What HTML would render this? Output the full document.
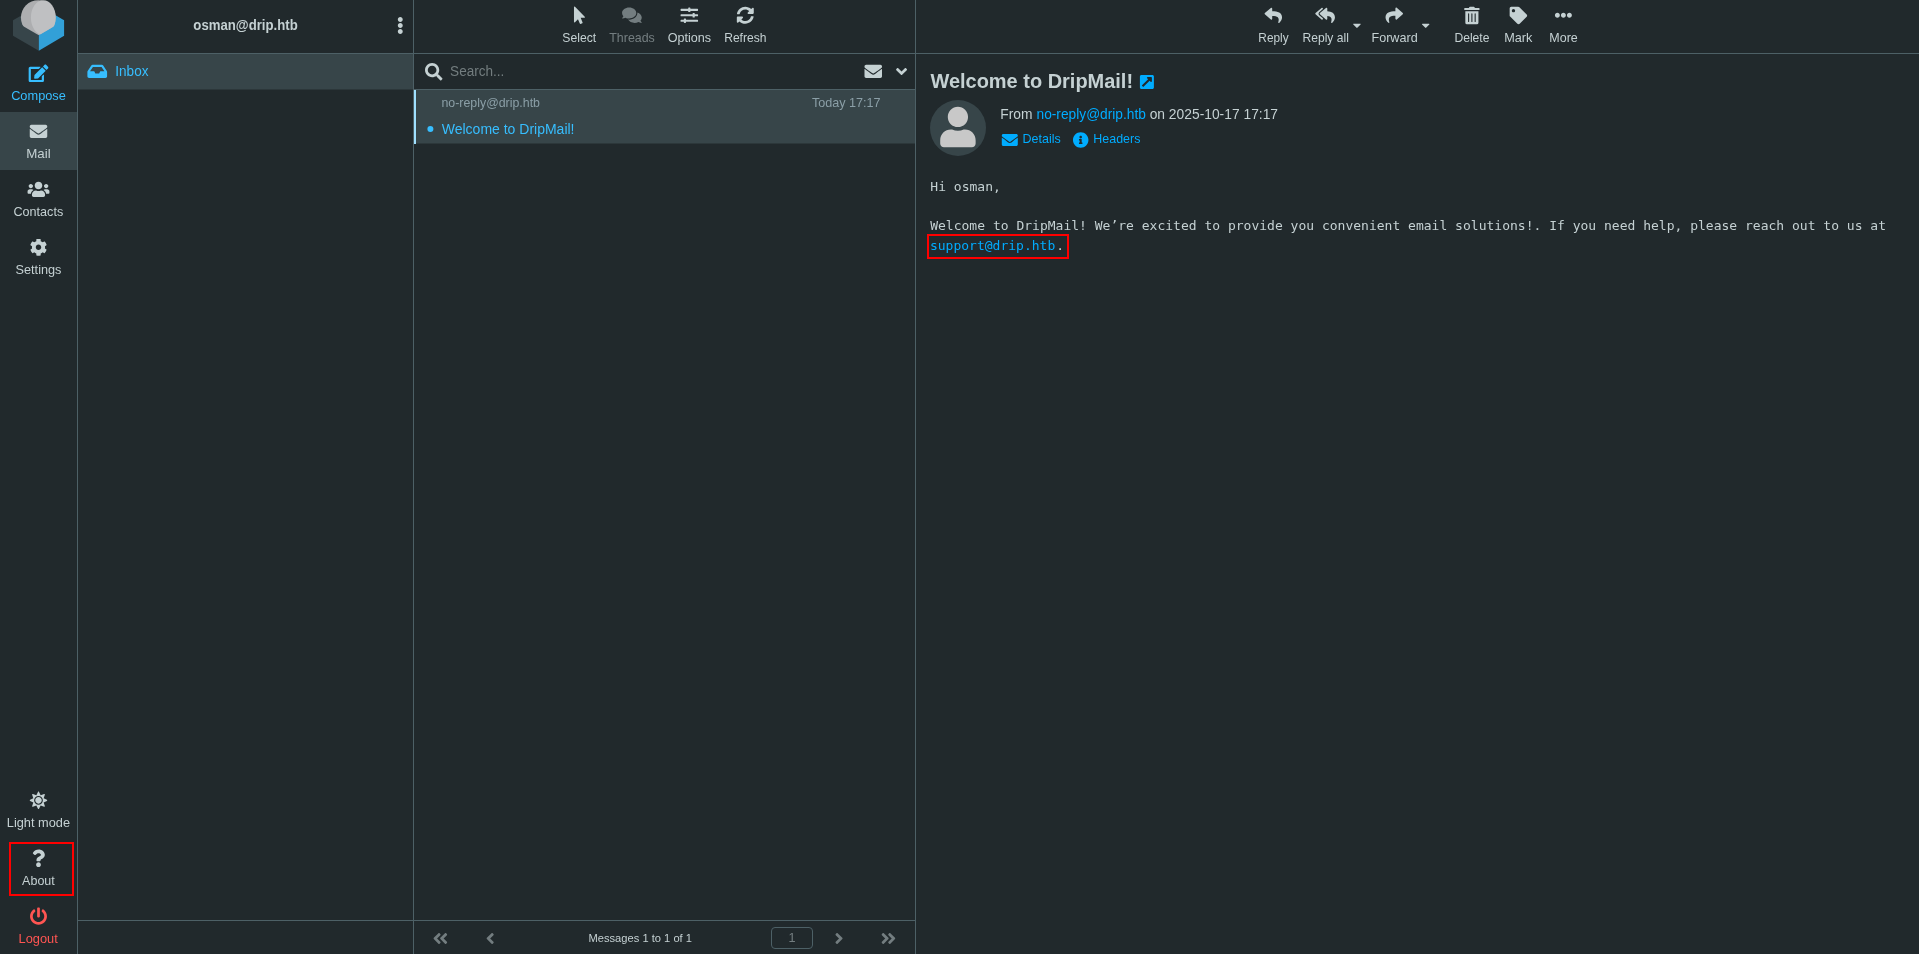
<!DOCTYPE html>
<html lang="en">
<head>
<meta charset="utf-8">
<title>DripMail :: Welcome to DripMail!</title>
<style>
*{box-sizing:border-box;margin:0;padding:0}
html,body{width:1919px;height:954px;overflow:hidden;background:#21292c;color:#c5d1d3;font-family:"Liberation Sans",Arial,sans-serif;font-size:14px}
a{color:#00acff;text-decoration:none}
h2{font-weight:700}
svg{display:block;fill:currentColor;overflow:visible}
.abs,.ic,.t,.redbox{position:absolute}
.ic{transform-origin:50% 50%}
.t{white-space:pre;line-height:1;transform-origin:0 0}
.mono{font-family:"DejaVu Sans Mono","Liberation Mono",monospace;letter-spacing:0.008px}
.redbox{border:2px solid #ff0000}
#menu,#sidebar,#list,#content{position:absolute;top:0;height:954px;will-change:transform}
#menu{left:0;width:78px;border-right:1px solid #4d6066}
#sidebar{left:78px;width:336px;border-right:1px solid #4d6066}
#list{left:414px;width:502px;border-right:1px solid #4d6066}
#content{left:916px;width:1003px}
.header{position:absolute;left:0;top:0;right:0;height:54px;border-bottom:1px solid #4d6066}
</style>
</head>
<body>
<nav id="menu">
<svg class="ic" id="logo" width="78" height="54" viewBox="0 0 78 54" style="left:0;top:0" aria-hidden="true">
<polygon points="13,20.3 38.8,5.4 38.8,50.8 13,35.8" fill="#37454a"/>
<polygon points="38.8,5.4 64.1,20.3 64.1,35.8 38.8,50.8" fill="#32a0d8"/>
<clipPath id="lc"><polygon points="0,-5 78,-5 78,12.2 38.8,35.2 0,12.8"/></clipPath>
<g clip-path="url(#lc)"><circle cx="38.3" cy="17.6" r="17.4" fill="#adaeb0"/><ellipse cx="43.3" cy="17.6" rx="12.4" ry="17.4" fill="#bfc0c2"/></g>
</svg>
<a class="mi" href="#compose"><svg class="ic" viewBox="0 0 576 512" width="19.69" height="17.50" style="left:28px;top:64px;transform:translate(0.66px,0.60px);color:#37beff" aria-hidden="true"><path d="M402.600 83.200l90.200 90.200c3.800 3.800 3.800 10 0 13.800L274.400 405.600l-92.800 10.300c-12.400 1.400-22.900-9.100-21.500-21.500l10.300-92.800L388.800 83.200c3.800-3.800 10-3.800 13.800 0zm162-22.900l-48.800-48.800c-15.200-15.200-39.900-15.200-55.200 0l-35.400 35.400c-3.800 3.800-3.800 10 0 13.800l90.200 90.200c3.800 3.800 10 3.800 13.800 0l35.400-35.400c15.200-15.300 15.200-40 0-55.200zM384 346.200V448H64V128h229.800c3.200 0 6.200-1.300 8.500-3.500l40-40c7.600-7.600 2.200-20.500-8.500-20.500H48C21.500 64 0 85.500 0 112v352c0 26.500 21.500 48 48 48h352c26.500 0 48-21.500 48-48V306.200c0-10.700-12.900-16-20.500-8.500l-40 40c-2.200 2.300-3.500 5.300-3.500 8.500z"/></svg><span id="m_compose" class="t" style="left:11px;top:90px;font-size:12.6px;color:#37beff;transform:matrix(1.0156,0,0,1,0.13,0)">Compose</span></a>
<div class="abs" style="left:0;top:112px;width:77px;height:58px;background:#374549"></div><a class="mi" href="#mail"><svg class="ic" viewBox="0 0 512 512" width="17.50" height="17.50" style="left:29px;top:122px;transform:translate(0.75px,0.60px);color:#c5d1d3" aria-hidden="true"><path d="M502.3 190.8c3.9-3.1 9.7-.2 9.7 4.7V400c0 26.5-21.5 48-48 48H48c-26.5 0-48-21.5-48-48V195.6c0-5 5.7-7.8 9.7-4.7 22.4 17.4 52.1 39.5 154.1 113.6 21.1 15.4 56.7 47.8 92.2 47.6 35.7.3 72-32.8 92.3-47.6 102-74.1 131.6-96.3 154-113.7zM256 320c23.2.4 56.6-29.2 73.4-41.4 132.7-96.3 142.8-104.7 173.4-128.7 5.8-4.5 9.2-11.5 9.2-18.9v-19c0-26.5-21.5-48-48-48H48C21.5 64 0 85.5 0 112v19c0 7.4 3.4 14.3 9.2 18.9 30.6 23.9 40.7 32.4 173.4 128.7 16.8 12.2 50.2 41.8 73.4 41.4z"/></svg><span id="m_mail" class="t" style="left:26px;top:148px;font-size:12.6px;color:#c5d1d3;transform:matrix(1.0596,0,0,1,0.17,0)">Mail</span></a>
<a class="mi" href="#contacts"><svg class="ic" viewBox="0 0 640 512" width="21.88" height="17.50" style="left:27px;top:180px;transform:translate(0.56px,0.60px);color:#c5d1d3" aria-hidden="true"><path d="M96 224c35.300 0 64-28.700 64-64s-28.700-64-64-64-64 28.700-64 64 28.700 64 64 64zm448 0c35.300 0 64-28.700 64-64s-28.700-64-64-64-64 28.700-64 64 28.700 64 64 64zm32 32h-64c-17.600 0-33.500 7.100-45.100 18.600 40.300 22.100 68.900 62 75.100 109.400h66c17.700 0 32-14.300 32-32v-32c0-35.300-28.700-64-64-64zm-256 0c61.900 0 112-50.100 112-112S381.900 32 320 32 208 82.100 208 144s50.100 112 112 112zm76.800 32h-8.300c-20.800 10-43.900 16-68.500 16s-47.600-6-68.500-16h-8.300C179.600 288 128 339.600 128 403.200V432c0 26.500 21.500 48 48 48h288c26.500 0 48-21.500 48-48v-28.800c0-63.600-51.600-115.200-115.200-115.200zm-223.700-13.400C161.500 263.100 145.600 256 128 256H64c-35.300 0-64 28.700-64 64v32c0 17.700 14.300 32 32 32h65.900c6.300-47.400 34.900-87.300 75.200-109.400z"/></svg><span id="m_contacts" class="t" style="left:13px;top:206px;font-size:12.6px;color:#c5d1d3;transform:matrix(1.0007,0,0,1,0.49,0)">Contacts</span></a>
<a class="mi" href="#settings"><svg class="ic" viewBox="0 0 512 512" width="17.50" height="17.50" style="left:29px;top:238px;transform:translate(0.75px,0.60px);color:#c5d1d3" aria-hidden="true"><path d="M487.4 315.7l-42.6-24.6c4.3-23.2 4.3-47 0-70.2l42.6-24.6c4.9-2.8 7.1-8.6 5.5-14-11.1-35.6-30-67.8-54.7-94.6-3.8-4.1-10-5.1-14.8-2.3L380.8 110c-17.9-15.4-38.5-27.3-60.8-35.1V25.8c0-5.6-3.9-10.5-9.4-11.7-36.7-8.2-74.3-7.8-109.2 0-5.5 1.2-9.4 6.1-9.4 11.7V75c-22.2 7.9-42.8 19.8-60.8 35.1L88.7 85.5c-4.9-2.8-11-1.9-14.8 2.3-24.7 26.7-43.6 58.9-54.7 94.6-1.7 5.4.6 11.2 5.5 14L67.3 221c-4.3 23.2-4.3 47 0 70.2l-42.6 24.6c-4.9 2.8-7.1 8.6-5.5 14 11.1 35.6 30 67.8 54.7 94.6 3.8 4.1 10 5.1 14.8 2.3l42.6-24.6c17.9 15.4 38.5 27.3 60.8 35.1v49.2c0 5.6 3.9 10.5 9.4 11.7 36.7 8.2 74.3 7.8 109.2 0 5.5-1.2 9.4-6.1 9.4-11.7v-49.2c22.2-7.9 42.8-19.8 60.8-35.1l42.6 24.6c4.9 2.8 11 1.9 14.8-2.3 24.7-26.7 43.6-58.9 54.7-94.6 1.5-5.5-.7-11.3-5.6-14.1zM256 336c-44.1 0-80-35.9-80-80s35.9-80 80-80 80 35.9 80 80-35.9 80-80 80z"/></svg><span id="m_settings" class="t" style="left:15px;top:264px;font-size:12.6px;color:#c5d1d3;transform:matrix(1.0097,0,0,1,0.52,0)">Settings</span></a>
<a class="mi" href="#light"><svg class="ic" viewBox="0 0 512 512" width="17.50" height="17.50" style="left:29px;top:791px;transform:translate(0.75px,0.60px);color:#c5d1d3" aria-hidden="true"><path d="M256 160c-52.900 0-96 43.100-96 96s43.100 96 96 96 96-43.100 96-96-43.100-96-96-96zm246.400 80.500l-94.700-47.300 33.500-100.400c4.500-13.600-8.400-26.500-21.900-21.900l-100.400 33.500-47.400-94.800c-6.400-12.800-24.600-12.800-31 0l-47.300 94.700L92.700 70.800c-13.600-4.500-26.500 8.400-21.900 21.900l33.500 100.400-94.700 47.400c-12.800 6.400-12.800 24.600 0 31l94.700 47.300-33.500 100.500c-4.500 13.600 8.400 26.500 21.900 21.900l100.400-33.500 47.300 94.700c6.400 12.800 24.600 12.800 31 0l47.300-94.700 100.400 33.500c13.600 4.500 26.500-8.400 21.900-21.900l-33.500-100.400 94.700-47.300c13-6.500 13-24.700.2-31.100zm-155.900 106c-49.900 49.900-131.100 49.900-181 0-49.900-49.900-49.900-131.100 0-181 49.900-49.900 131.100-49.900 181 0 49.900 49.900 49.900 131.100 0 181z"/></svg><span id="m_light" class="t" style="left:6px;top:817px;font-size:12.6px;color:#c5d1d3;transform:matrix(1.0143,0,0,1,0.81,0)">Light mode</span></a>
<a class="mi" href="#about"><svg class="ic" viewBox="0 0 384 512" width="13.12" height="17.50" style="left:31px;top:849px;transform:translate(0.94px,0.60px);color:#c5d1d3" aria-hidden="true"><path d="M202.021 0C122.202 0 70.503 32.703 29.914 91.026c-7.363 10.580-5.093 25.086 5.178 32.874l43.138 32.709c10.373 7.865 25.132 6.026 33.253-4.148 25.049-31.381 43.630-49.449 82.757-49.449 30.764 0 68.816 19.799 68.816 49.631 0 22.552-18.617 34.134-48.993 51.164-35.423 19.860-82.299 44.576-82.299 106.405V320c0 13.255 10.745 24 24 24h72.471c13.255 0 24-10.745 24-24v-5.773c0-42.860 125.268-44.645 125.268-160.627C377.504 66.256 286.902 0 202.021 0zM192 373.459c-38.196 0-69.271 31.075-69.271 69.271 0 38.195 31.075 69.270 69.271 69.270s69.271-31.075 69.271-69.271-31.075-69.270-69.271-69.270z"/></svg><span id="m_about" class="t" style="left:22px;top:875px;font-size:12.6px;color:#c5d1d3;transform:matrix(0.9921,0,0,1,0.11,0)">About</span></a>
<a class="mi" href="#logout"><svg class="ic" viewBox="0 0 512 512" width="17.50" height="17.50" style="left:29px;top:907px;transform:translate(0.75px,0.60px);color:#ff5552" aria-hidden="true"><path d="M400 54.100c63 45 104 118.600 104 201.900 0 136.800-110.800 247.700-247.500 248C120 504.300 8.200 393 8 256.400 7.900 173.100 48.900 99.300 111.800 54.200c11.700-8.300 28-4.800 35 7.700L162.600 90c5.900 10.500 3.100 23.800-6.600 31-41.500 30.800-68 79.600-68 134.900-.1 92.300 74.500 168.100 168 168.100 91.600 0 168.600-74.200 168-169.100-.3-51.800-24.700-101.800-68.100-134-9.700-7.200-12.400-20.500-6.500-30.900l15.800-28.100c7-12.400 23.200-16.100 34.800-7.800zM296 264V24c0-13.300-10.700-24-24-24h-32c-13.300 0-24 10.700-24 24v240c0 13.300 10.700 24 24 24h32c13.300 0 24-10.700 24-24z"/></svg><span id="m_logout" class="t" style="left:18px;top:933px;font-size:12.6px;color:#ff5552;transform:matrix(1.0186,0,0,1,0.56,0)">Logout</span></a>
<div class="redbox" style="left:9px;top:842px;width:65px;height:54px"></div>
</nav>
<aside id="sidebar"><header class="header">
<span id="acct" class="t" style="left:115px;top:18px;font-size:14.4px;color:#c5d1d3;transform:matrix(0.9155,0,0,1,0.36,0);font-weight:700">osman@drip.htb</span>
<svg class="ic" viewBox="0 0 192 512" width="6.56" height="17.50" style="left:319px;top:16px;transform:translate(0.00px,0.70px);color:#c5d1d3" aria-hidden="true"><path d="M96 184c39.800 0 72 32.200 72 72s-32.200 72-72 72-72-32.200-72-72 32.200-72 72-72zM24 80c0 39.800 32.200 72 72 72s72-32.200 72-72S135.800 8 96 8 24 40.200 24 80zm0 352c0 39.800 32.200 72 72 72s72-32.200 72-72-32.200-72-72-72-72 32.200-72 72z"/></svg>
</header>
<div class="abs" style="left:0;top:54px;width:335px;height:36px;background:#374549;border-bottom:1px solid #2c373a"></div>
<div class="abs" style="left:0;top:920px;width:335px;height:34px;border-top:1px solid #4d6066"></div>
<svg class="ic" viewBox="0 0 576 512" width="19.69" height="17.50" style="left:9px;top:62px;transform:translate(0.40px,0.60px);color:#37beff" aria-hidden="true"><path d="M567.938 243.908L462.250 85.374A48.003 48.003 0 0 0 422.311 64H153.689a48 48 0 0 0-39.938 21.374L8.062 243.908A47.994 47.994 0 0 0 0 270.533V400c0 26.510 21.490 48 48 48h480c26.510 0 48-21.490 48-48V270.533a47.994 47.994 0 0 0-8.062-26.625zM162.252 128h251.497l85.333 128H376l-32 64H232l-32-64H76.918l85.334-128z"/></svg>
<a id="inbox" class="t" href="#inbox" style="left:37px;top:64px;font-size:14px;color:#37beff;transform:matrix(0.9688,0,0,1,0.28,0)">Inbox</a>
</aside>
<section id="list"><header class="header">
<svg class="ic" viewBox="0 0 320 512" width="10.94" height="17.50" style="left:159px;top:6px;transform:translate(0.98px,0.50px);color:#c5d1d3" aria-hidden="true"><path d="M302.189 329.126H196.105l55.831 135.993c3.889 9.428-.555 19.999-9.444 23.999l-49.165 21.427c-9.165 4-19.443-.571-23.332-9.714l-53.053-129.136-86.664 89.138C18.729 472.710 0 463.554 0 447.977V18.299C0 1.899 19.921-6.096 30.277 5.443l284.412 292.542c11.472 11.179 3.007 31.141-12.500 31.141z"/></svg><span id="tb_select" class="t" style="left:148px;top:32px;font-size:12.6px;color:#c5d1d3;transform:matrix(0.9673,0,0,1,0.28,0)">Select</span>
<svg class="ic" viewBox="0 0 576 512" width="19.69" height="17.50" style="left:208px;top:6px;transform:translate(0.06px,0.50px);color:#c5d1d3;opacity:0.5" aria-hidden="true"><path d="M416 192c0-88.400-93.100-160-208-160S0 103.600 0 192c0 34.300 14.100 65.900 38 92-13.400 30.200-35.500 54.200-35.800 54.500-2.200 2.300-2.800 5.700-1.500 8.700S4.800 352 8 352c36.600 0 66.900-12.300 88.700-25 32.200 15.700 70.300 25 111.300 25 114.900 0 208-71.600 208-160zm122 220c23.900-26 38-57.700 38-92 0-66.900-53.500-124.200-129.300-148.100.9 6.600 1.300 13.300 1.300 20.100 0 105.900-107.700 192-240 192-10.800 0-21.300-.8-31.700-1.900C207.800 439.600 281.800 480 368 480c41 0 79.100-9.200 111.300-25 21.800 12.700 52.100 25 88.700 25 3.200 0 6.100-1.900 7.300-4.800 1.300-2.900.7-6.300-1.500-8.700-.3-.3-22.400-24.200-35.800-54.500z"/></svg><span id="tb_threads" class="t" style="left:195px;top:32px;font-size:12.6px;color:#c5d1d3;transform:matrix(0.9858,0,0,1,0.27,0);opacity:0.5">Threads</span>
<svg class="ic" viewBox="0 0 512 512" width="17.50" height="17.50" style="left:266px;top:6px;transform:translate(0.55px,0.50px);color:#c5d1d3" aria-hidden="true"><path d="M496 384H160v-16c0-8.800-7.200-16-16-16h-32c-8.800 0-16 7.200-16 16v16H16c-8.800 0-16 7.200-16 16v32c0 8.800 7.200 16 16 16h80v16c0 8.800 7.200 16 16 16h32c8.800 0 16-7.200 16-16v-16h336c8.800 0 16-7.200 16-16v-32c0-8.800-7.200-16-16-16zm0-160h-80v-16c0-8.800-7.200-16-16-16h-32c-8.800 0-16 7.200-16 16v16H16c-8.800 0-16 7.200-16 16v32c0 8.800 7.200 16 16 16h336v16c0 8.800 7.200 16 16 16h32c8.800 0 16-7.200 16-16v-16h80c8.800 0 16-7.200 16-16v-32c0-8.800-7.200-16-16-16zm0-160H288V48c0-8.800-7.200-16-16-16h-32c-8.800 0-16 7.200-16 16v16H16C7.200 64 0 71.200 0 80v32c0 8.800 7.200 16 16 16h208v16c0 8.800 7.200 16 16 16h32c8.800 0 16-7.200 16-16v-16h208c8.800 0 16-7.200 16-16V80c0-8.800-7.200-16-16-16z"/></svg><span id="tb_options" class="t" style="left:253px;top:32px;font-size:12.6px;color:#c5d1d3;transform:matrix(1.0004,0,0,1,0.65,0)">Options</span>
<svg class="ic" viewBox="0 0 512 512" width="17.50" height="17.50" style="left:322px;top:6px;transform:translate(0.55px,0.50px);color:#c5d1d3" aria-hidden="true"><path d="M370.720 133.280C339.458 104.008 298.888 87.962 255.848 88c-77.458.068-144.328 53.178-162.791 126.850-1.344 5.363-6.122 9.150-11.651 9.150H24.103c-7.498 0-13.194-6.807-11.807-14.176C33.933 94.924 134.813 8 256 8c66.448 0 126.791 26.136 171.315 68.685L463.030 40.970C478.149 25.851 504 36.559 504 57.941V192c0 13.255-10.745 24-24 24H345.941c-21.382 0-32.090-25.851-16.971-40.971l41.750-41.749zM32 296h134.059c21.382 0 32.090 25.851 16.971 40.971l-41.750 41.750c31.262 29.273 71.835 45.319 114.876 45.280 77.418-.070 144.315-53.144 162.787-126.849 1.344-5.363 6.122-9.150 11.651-9.150h57.304c7.498 0 13.194 6.807 11.807 14.176C478.067 417.076 377.187 504 256 504c-66.448 0-126.791-26.136-171.315-68.685L48.970 471.030C33.851 486.149 8 475.441 8 454.059V320c0-13.255 10.745-24 24-24z"/></svg><span id="tb_refresh" class="t" style="left:310px;top:32px;font-size:12.6px;color:#c5d1d3;transform:matrix(0.9579,0,0,1,0.17,0)">Refresh</span>
</header>
<div class="abs" style="left:0;top:54px;width:501px;height:36px;border-bottom:1px solid #4d6066"></div>
<svg class="ic" viewBox="0 0 512 512" width="17.50" height="17.50" style="left:11px;top:63px;color:#c5d1d3" aria-hidden="true"><path d="M505 442.7L405.3 343c-4.5-4.5-10.6-7-17-7H372c27.6-35.3 44-79.7 44-128C416 93.1 322.9 0 208 0S0 93.1 0 208s93.1 208 208 208c48.3 0 92.7-16.4 128-44v16.3c0 6.4 2.5 12.5 7 17l99.7 99.7c9.4 9.4 24.6 9.4 33.9 0l28.3-28.3c9.4-9.4 9.4-24.6.1-34zM208 336c-70.7 0-128-57.2-128-128 0-70.7 57.2-128 128-128 70.7 0 128 57.2 128 128 0 70.7-57.2 128-128 128z"/></svg>
<span id="search" class="t" style="left:36px;top:64px;font-size:14px;color:#737d7f;transform:matrix(0.9691,0,0,1,0.09,0)">Search...</span>
<svg class="ic" viewBox="0 0 512 512" width="17.50" height="17.50" style="left:450px;top:62px;transform:translate(0.50px,0.60px);color:#c5d1d3" aria-hidden="true"><path d="M502.3 190.8c3.9-3.1 9.7-.2 9.7 4.7V400c0 26.5-21.5 48-48 48H48c-26.5 0-48-21.5-48-48V195.6c0-5 5.7-7.8 9.7-4.7 22.4 17.4 52.1 39.5 154.1 113.6 21.1 15.4 56.7 47.8 92.2 47.6 35.7.3 72-32.8 92.3-47.6 102-74.1 131.6-96.3 154-113.7zM256 320c23.2.4 56.6-29.2 73.4-41.4 132.7-96.3 142.8-104.7 173.4-128.7 5.8-4.5 9.2-11.5 9.2-18.9v-19c0-26.5-21.5-48-48-48H48C21.5 64 0 85.5 0 112v19c0 7.4 3.4 14.3 9.2 18.9 30.6 23.9 40.7 32.4 173.4 128.7 16.8 12.2 50.2 41.8 73.4 41.4z"/></svg>
<svg class="ic" viewBox="0 0 256 512" width="8.75" height="17.50" style="left:483px;top:62px;transform:translate(0.17px,0.75px) rotate(-90deg);color:#c5d1d3" aria-hidden="true"><path d="M31.700 239l136-136c9.400-9.400 24.600-9.400 33.900 0l22.600 22.600c9.400 9.400 9.400 24.600 0 33.900L127.900 256l96.400 96.400c9.400 9.400 9.400 24.600 0 33.900L201.700 409c-9.400 9.400-24.600 9.400-33.900 0l-136-136c-9.500-9.400-9.500-24.600-.1-34z"/></svg>
<div class="abs" style="left:0;top:90px;width:501px;height:53px;background:#374549"></div>
<div class="abs" style="left:0;top:143px;width:501px;height:1px;background:#2c373a"></div>
<div class="abs" style="left:0;top:90px;width:2px;height:54px;background:#a0e0ff"></div>
<span id="l_from" class="t" style="left:27px;top:97px;font-size:12.6px;color:#8b9fa7;transform:matrix(0.9825,0,0,1,0.46,0)">no-reply@drip.htb</span>
<span id="l_date" class="t" style="left:397px;top:97px;font-size:12.6px;color:#8b9fa7;transform:matrix(1.0015,0,0,1,0.88,0)">Today 17:17</span>
<div class="abs" style="left:13px;top:126px;transform:translate(0.40px,0.00px);width:6px;height:6px;border-radius:50%;background:#37beff"></div>
<span id="l_subj" class="t" style="left:27px;top:122px;font-size:14px;color:#37beff;transform:matrix(0.9996,0,0,1,0.77,0)">Welcome to DripMail!</span>
<div class="abs" style="left:0;top:920px;width:501px;height:34px;border-top:1px solid #4d6066"></div>
<svg class="ic" viewBox="0 0 448 512" width="15.31" height="17.50" style="left:18px;top:929px;transform:translate(0.70px,0.70px);color:#c5d1d3;opacity:0.5" aria-hidden="true"><path d="M223.700 239l136-136c9.400-9.400 24.600-9.400 33.900 0l22.600 22.600c9.400 9.400 9.400 24.600 0 33.900L319.900 256l96.400 96.400c9.400 9.400 9.400 24.600 0 33.900L393.700 409c-9.400 9.400-24.600 9.400-33.900 0l-136-136c-9.500-9.400-9.500-24.600-.1-34zm-192 34l136 136c9.400 9.400 24.600 9.400 33.900 0l22.600-22.600c9.400-9.400 9.400-24.600 0-33.900L127.900 256l96.400-96.400c9.400-9.400 9.400-24.600 0-33.900L201.700 103c-9.400-9.400-24.600-9.400-33.900 0l-136 136c-9.500 9.400-9.500 24.600-.1 34z"/></svg>
<svg class="ic" viewBox="0 0 256 512" width="8.75" height="17.50" style="left:71px;top:929px;transform:translate(0.80px,0.70px);color:#c5d1d3;opacity:0.5" aria-hidden="true"><path d="M31.700 239l136-136c9.400-9.400 24.600-9.400 33.900 0l22.600 22.600c9.400 9.400 9.400 24.600 0 33.900L127.900 256l96.400 96.400c9.400 9.400 9.400 24.600 0 33.900L201.700 409c-9.400 9.400-24.600 9.400-33.900 0l-136-136c-9.500-9.400-9.500-24.600-.1-34z"/></svg>
<span id="pager" class="t" style="left:174px;top:933px;font-size:11.2px;color:#c5d1d3;transform:matrix(0.9972,0,0,1,0.43,0)">Messages 1 to 1 of 1</span>
<div class="abs" style="left:357px;top:927px;width:42px;height:22px;border:1px solid #4d6066;border-radius:4px"></div>
<span id="pagenum" class="t" style="left:374px;top:932px;font-size:12.6px;color:#c5d1d3;transform:matrix(1.0000,0,0,1,0.41,0);opacity:0.5">1</span>
<svg class="ic" viewBox="0 0 256 512" width="8.75" height="17.50" style="left:420px;top:929px;transform:translate(0.64px,0.70px) scaleX(-1);color:#c5d1d3;opacity:0.5" aria-hidden="true"><path d="M31.700 239l136-136c9.400-9.400 24.600-9.400 33.900 0l22.600 22.600c9.400 9.400 9.400 24.600 0 33.900L127.900 256l96.400 96.400c9.400 9.400 9.400 24.600 0 33.900L201.700 409c-9.400 9.400-24.600 9.400-33.900 0l-136-136c-9.500-9.400-9.500-24.600-.1-34z"/></svg>
<svg class="ic" viewBox="0 0 448 512" width="15.31" height="17.50" style="left:466px;top:929px;transform:translate(0.80px,0.70px) scaleX(-1);color:#c5d1d3;opacity:0.5" aria-hidden="true"><path d="M223.700 239l136-136c9.400-9.400 24.600-9.400 33.900 0l22.600 22.600c9.400 9.400 9.400 24.600 0 33.900L319.900 256l96.400 96.400c9.400 9.400 9.400 24.600 0 33.900L393.700 409c-9.400 9.400-24.600 9.400-33.900 0l-136-136c-9.500-9.400-9.500-24.600-.1-34zm-192 34l136 136c9.400 9.400 24.600 9.400 33.900 0l22.600-22.600c9.400-9.400 9.400-24.600 0-33.900L127.900 256l96.400-96.400c9.400-9.400 9.400-24.600 0-33.900L201.700 103c-9.400-9.400-24.600-9.400-33.900 0l-136 136c-9.500 9.400-9.500 24.600-.1 34z"/></svg>
</section>
<main id="content"><header class="header">
<svg class="ic" viewBox="0 0 512 512" width="17.50" height="17.50" style="left:348px;top:6px;transform:translate(0.55px,0.60px);color:#c5d1d3" aria-hidden="true"><path d="M8.309 189.836L184.313 37.851C199.719 24.546 224 35.347 224 56.015v80.053c160.629 1.839 288 34.032 288 186.258 0 61.441-39.581 122.309-83.333 154.132-13.653 9.931-33.111-2.533-28.077-18.631 45.344-145.012-21.507-183.51-176.59-185.742V360c0 20.7-24.3 31.453-39.687 18.164l-176.004-152c-11.071-9.562-11.086-26.753 0-36.328z"/></svg><span id="tb_reply" class="t" style="left:342px;top:32px;font-size:12.6px;color:#c5d1d3;transform:matrix(0.9388,0,0,1,0.35,0)">Reply</span>
<svg class="ic" viewBox="0 0 576 512" width="19.69" height="17.50" style="left:399px;top:6px;transform:translate(0.26px,0.60px);color:#c5d1d3" aria-hidden="true"><path d="M136.309 189.836L312.313 37.851C327.72 24.546 352 35.348 352 56.015v82.763c129.182 10.231 224 52.212 224 183.548 0 61.441-39.582 122.309-83.333 154.132-13.653 9.931-33.111-2.533-28.077-18.631 38.512-123.162-3.922-169.482-112.59-182.015v84.175c0 20.701-24.3 31.453-39.687 18.164L136.309 226.164c-11.071-9.561-11.086-26.753 0-36.328zm-128 36.328L184.313 378.15C199.7 391.439 224 380.687 224 359.986v-15.818l-108.606-93.785A55.96 55.96 0 0 1 96 207.998a55.953 55.953 0 0 1 19.393-42.38L224 71.832V56.015c0-20.667-24.28-31.469-39.687-18.164L8.309 189.836c-11.086 9.575-11.071 26.767 0 36.328z"/></svg><span id="tb_replyall" class="t" style="left:386px;top:32px;font-size:12.6px;color:#c5d1d3;transform:matrix(0.9604,0,0,1,0.47,0)">Reply all</span>
<svg class="ic" viewBox="0 0 320 512" width="8.12" height="13.00" style="left:436px;top:18px;transform:translate(0.89px,0.80px);color:#c5d1d3" aria-hidden="true"><path d="M31.300 192h257.300c17.800 0 26.700 21.500 14.100 34.100L174.100 354.800c-7.800 7.800-20.500 7.800-28.300 0L17.200 226.100C4.600 213.500 13.500 192 31.300 192z"/></svg>
<svg class="ic" viewBox="0 0 512 512" width="17.50" height="17.50" style="left:469px;top:6px;transform:translate(0.55px,0.50px);color:#c5d1d3" aria-hidden="true"><path d="M503.691 189.836L327.687 37.851C312.281 24.546 288 35.347 288 56.015v80.053C127.371 137.907 0 170.1 0 322.326c0 61.441 39.581 122.309 83.333 154.132 13.653 9.931 33.111-2.533 28.077-18.631C66.066 312.814 132.917 274.316 288 272.085V360c0 20.7 24.3 31.453 39.687 18.164l176.004-152c11.071-9.562 11.086-26.753 0-36.328z"/></svg><span id="tb_forward" class="t" style="left:455px;top:32px;font-size:12.6px;color:#c5d1d3;transform:matrix(1.0004,0,0,1,0.45,0)">Forward</span>
<svg class="ic" viewBox="0 0 320 512" width="8.12" height="13.00" style="left:505px;top:18px;transform:translate(0.64px,0.80px);color:#c5d1d3" aria-hidden="true"><path d="M31.300 192h257.300c17.800 0 26.700 21.500 14.100 34.100L174.100 354.800c-7.800 7.800-20.500 7.800-28.300 0L17.200 226.100C4.600 213.500 13.500 192 31.300 192z"/></svg>
<svg class="ic" viewBox="0 0 448 512" width="15.31" height="17.50" style="left:548px;top:6px;transform:translate(0.24px,0.80px);color:#c5d1d3" aria-hidden="true"><path d="M32 464a48 48 0 0 0 48 48h288a48 48 0 0 0 48-48V128H32zm272-256a16 16 0 0 1 32 0v224a16 16 0 0 1-32 0zm-96 0a16 16 0 0 1 32 0v224a16 16 0 0 1-32 0zm-96 0a16 16 0 0 1 32 0v224a16 16 0 0 1-32 0zM432 32H312l-9.400-18.700A24 24 0 0 0 281.100 0H166.800a23.720 23.720 0 0 0-21.400 13.300L136 32H16A16 16 0 0 0 0 48v32a16 16 0 0 0 16 16h416a16 16 0 0 0 16-16V48a16 16 0 0 0-16-16z"/></svg><span id="tb_delete" class="t" style="left:538px;top:32px;font-size:12.6px;color:#c5d1d3;transform:matrix(0.9633,0,0,1,0.39,0)">Delete</span>
<svg class="ic" viewBox="0 0 512 512" width="17.50" height="17.50" style="left:593px;top:6px;transform:translate(0.65px,0.80px);color:#c5d1d3" aria-hidden="true"><path d="M0 252.118V48C0 21.490 21.490 0 48 0h204.118a48 48 0 0 1 33.941 14.059l211.882 211.882c18.745 18.745 18.745 49.137 0 67.882L293.823 497.941c-18.745 18.745-49.137 18.745-67.882 0L14.059 286.059A48 48 0 0 1 0 252.118zM112 64c-26.510 0-48 21.490-48 48s21.490 48 48 48 48-21.490 48-48-21.490-48-48-48z"/></svg><span id="tb_mark" class="t" style="left:588px;top:32px;font-size:12.6px;color:#c5d1d3;transform:matrix(1.0082,0,0,1,0.20,0)">Mark</span>
<svg class="ic" viewBox="0 0 512 512" width="17.50" height="17.50" style="left:638px;top:6px;transform:translate(0.65px,0.50px);color:#c5d1d3" aria-hidden="true"><path d="M328 256c0 39.800-32.200 72-72 72s-72-32.200-72-72 32.200-72 72-72 72 32.200 72 72zm104-72c-39.800 0-72 32.200-72 72s32.200 72 72 72 72-32.200 72-72-32.200-72-72-72zm-352 0c-39.800 0-72 32.200-72 72s32.200 72 72 72 72-32.200 72-72-32.200-72-72-72z"/></svg><span id="tb_more" class="t" style="left:633px;top:32px;font-size:12.6px;color:#c5d1d3;transform:matrix(0.9923,0,0,1,0.30,0)">More</span>
</header>
<h2 id="subject" class="t" style="left:14px;top:72px;font-size:19.6px;color:#c5d1d3;transform:matrix(1.0191,0,0,1,0.40,0);font-weight:700">Welcome to DripMail!</h2>
<svg class="ic" viewBox="0 0 448 512" width="14.00" height="16.00" style="left:223px;top:73px;transform:translate(0.90px,0.90px);color:#00acff" aria-hidden="true"><path d="M448 80v352c0 26.510-21.490 48-48 48H48c-26.510 0-48-21.490-48-48V80c0-26.510 21.490-48 48-48h352c26.510 0 48 21.490 48 48zm-88 16H248.029c-21.313 0-32.080 25.861-16.971 40.971l31.984 31.987L67.515 364.485c-4.686 4.686-4.686 12.284 0 16.971l31.029 31.029c4.687 4.686 12.285 4.686 16.971 0l195.526-195.526 31.988 31.991C358.058 263.977 384 253.425 384 231.979V120c0-13.255-10.745-24-24-24z"/></svg>
<div class="abs" style="left:14px;top:100px;width:56px;height:56px;border-radius:50%;background:#374549"></div>
<svg class="ic" viewBox="0 0 448 512" width="35.44" height="40.50" style="left:24px;top:106px;transform:translate(0.20px,0.80px);color:#c8c8c8" aria-hidden="true"><path d="M224 256c70.7 0 128-57.3 128-128S294.7 0 224 0 96 57.3 96 128s57.3 128 128 128zm89.6 32h-16.7c-22.2 10.2-46.9 16-72.9 16s-50.6-5.8-72.9-16h-16.7C60.2 288 0 348.2 0 422.4V464c0 26.5 21.5 48 48 48h352c26.5 0 48-21.5 48-48v-41.6c0-74.2-60.2-134.4-134.4-134.4z"/></svg>
<span id="from1" class="t" style="left:84px;top:107px;font-size:14px;color:#c5d1d3;transform:matrix(0.9861,0,0,1,0.34,0)">From</span>
<a id="from2" class="t" href="#from" style="left:120px;top:107px;font-size:14px;color:#00acff;transform:matrix(0.9815,0,0,1,0.50,0)">no-reply@drip.htb</a>
<span id="from3" class="t" style="left:233px;top:107px;font-size:14px;color:#c5d1d3;transform:matrix(0.9876,0,0,1,0.65,0)">on 2025-10-17 17:17</span>
<svg class="ic" viewBox="0 0 512 512" width="16.00" height="16.00" style="left:85px;top:131px;transform:translate(0.80px,0.90px);color:#00acff" aria-hidden="true"><path d="M502.3 190.8c3.9-3.1 9.7-.2 9.7 4.7V400c0 26.5-21.5 48-48 48H48c-26.5 0-48-21.5-48-48V195.6c0-5 5.7-7.8 9.7-4.7 22.4 17.4 52.1 39.5 154.1 113.6 21.1 15.4 56.7 47.8 92.2 47.6 35.7.3 72-32.8 92.3-47.6 102-74.1 131.6-96.3 154-113.7zM256 320c23.2.4 56.6-29.2 73.4-41.4 132.7-96.3 142.8-104.7 173.4-128.7 5.8-4.5 9.2-11.5 9.2-18.9v-19c0-26.5-21.5-48-48-48H48C21.5 64 0 85.5 0 112v19c0 7.4 3.4 14.3 9.2 18.9 30.6 23.9 40.7 32.4 173.4 128.7 16.8 12.2 50.2 41.8 73.4 41.4z"/></svg>
<a id="details" class="t" href="#details" style="left:106px;top:133px;font-size:12.6px;color:#00acff;transform:matrix(0.9935,0,0,1,0.46,0)">Details</a>
<svg class="ic" viewBox="0 0 512 512" width="16.00" height="16.00" style="left:156px;top:132px;transform:translate(0.70px,0.10px);color:#00acff" aria-hidden="true"><path d="M256 8C119.043 8 8 119.083 8 256c0 136.997 111.043 248 248 248s248-111.003 248-248C504 119.083 392.957 8 256 8zm0 110c23.196 0 42 18.804 42 42s-18.804 42-42 42-42-18.804-42-42 18.804-42 42-42zm56 254c0 6.627-5.373 12-12 12h-88c-6.627 0-12-5.373-12-12v-24c0-6.627 5.373-12 12-12h12v-64h-12c-6.627 0-12-5.373-12-12v-24c0-6.627 5.373-12 12-12h64c6.627 0 12 5.373 12 12v100h12c6.627 0 12 5.373 12 12v24z"/></svg>
<a id="headers" class="t" href="#headers" style="left:177px;top:133px;font-size:12.6px;color:#00acff;transform:matrix(0.9874,0,0,1,0.36,0)">Headers</a>
<span id="b1" class="t mono" style="left:14px;top:180px;font-size:13px;color:#c5d1d3;transform:matrix(1.0000,0,0,1,0.35,0)">Hi osman,</span>
<span id="b2" class="t mono" style="left:14px;top:219px;font-size:13px;color:#c5d1d3;transform:matrix(1.0000,0,0,1,0.20,0)">Welcome to DripMail! We’re excited to provide you convenient email solutions!. If you need help, please reach out to us at</span>
<a id="b3" class="t mono" href="#support" style="left:13px;top:239px;font-size:13px;color:#00acff;transform:matrix(1.0000,0,0,1,0.93,0)">support@drip.htb</a>
<span id="b4" class="t mono" style="left:140px;top:239px;font-size:13px;color:#c5d1d3;transform:matrix(1.0000,0,0,1,0.25,0)">.</span>
<div class="redbox" style="left:11px;top:234px;width:142px;height:25px"></div>
</main>
</body>
</html>
